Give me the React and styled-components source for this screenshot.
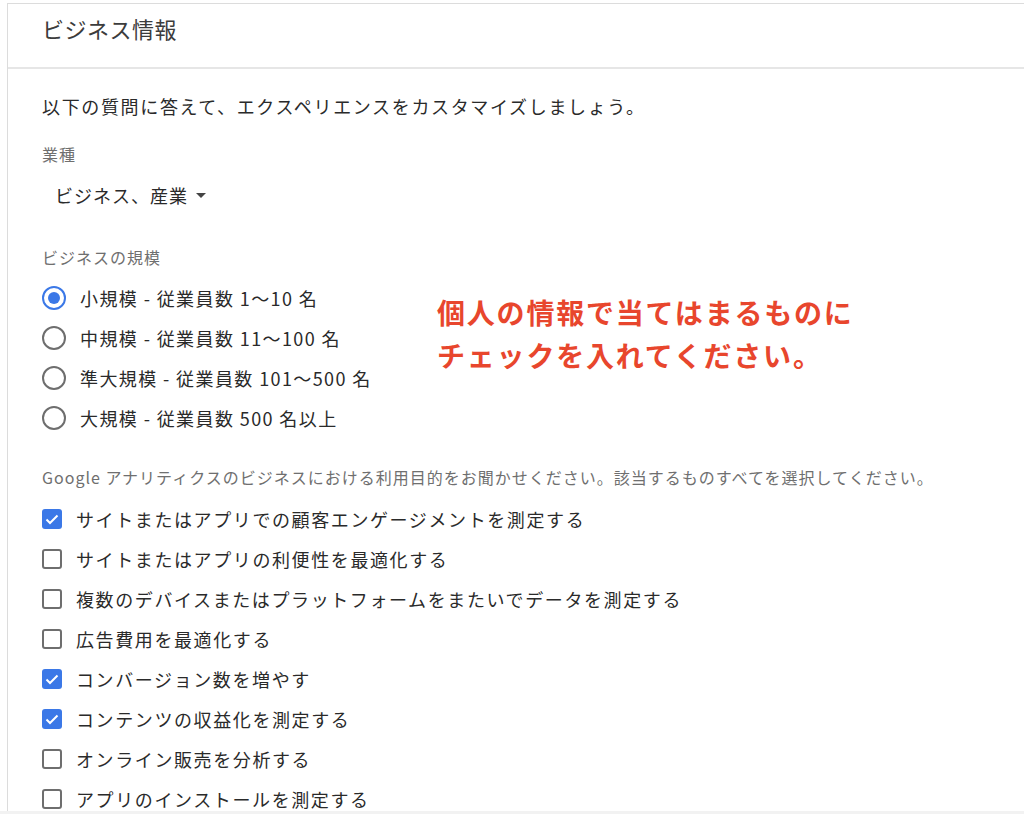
import React from "react";
import styled, { createGlobalStyle } from "styled-components";

const Global = createGlobalStyle`
  html, body { margin: 0; padding: 0; background: #fff; }
  body { font-family: "Noto Sans CJK JP", "Noto Sans", Roboto, sans-serif; }
`;

const Page = styled.div`
  height: 814px;
  box-sizing: border-box;
  padding: 3px 0 0 7px;
  border-bottom: 3px solid #f2f2f2;
  overflow: hidden;
`;

const Card = styled.div`
  height: 100%;
  border-top: 1px solid #dcdcdc;
  border-left: 1px solid #dcdcdc;
  box-sizing: border-box;
  display: flex;
  flex-direction: column;
`;

const Header = styled.div`
  flex-shrink: 0;
  height: 65px;
  box-sizing: border-box;
  padding: 9px 0 0 34px;
  border-bottom: 2px solid #e6e6e6;
  font-size: 22px;
  letter-spacing: 0.5px;
  color: #3c3c3c;
  line-height: 30px;
`;

const Body = styled.div`
  flex-shrink: 0;
  padding: 24px 0 0 34px;
  display: flex;
  flex-direction: column;
`;

const Intro = styled.div`
  font-size: 18px;
  letter-spacing: 1.65px;
  color: #2a2a2a;
  line-height: 26px;
`;

const Label = styled.div`
  font-size: 16px;
  letter-spacing: 1px;
  color: #6f6f6f;
  line-height: 22px;
  margin-top: ${(p) => p.$mt}px;
`;

const Select = styled.div`
  display: flex;
  align-items: center;
  gap: 6px;
  margin: 17px 0 0 13px;
  font-size: 18px;
  letter-spacing: 1px;
  color: #2a2a2a;
  line-height: 26px;
`;

const Caret = styled.span`
  width: 0;
  height: 0;
  border-left: 5px solid transparent;
  border-right: 5px solid transparent;
  border-top: 5px solid #444;
  margin-left: 2px;
`;

const Row = styled.div`
  display: flex;
  align-items: center;
  height: 40px;
`;

const Split = styled.div`
  display: flex;
  align-items: flex-start;
  margin-top: 10px;
`;

const Radios = styled.div`
  display: flex;
  flex-direction: column;
  width: 395px;
`;

const RadioCircle = styled.span`
  width: 24px;
  height: 24px;
  box-sizing: border-box;
  border-radius: 50%;
  border: 2px solid ${(p) => (p.$on ? "#3b78e7" : "#6e6e6e")};
  display: flex;
  align-items: center;
  justify-content: center;
  margin-right: 14px;
  &::after {
    content: "";
    width: 12px;
    height: 12px;
    border-radius: 50%;
    background: ${(p) => (p.$on ? "#3b78e7" : "transparent")};
  }
`;

const OptionText = styled.span`
  font-size: 18px;
  letter-spacing: ${(p) => p.$ls || 1.4}px;
  color: #2a2a2a;
  line-height: 24px;
`;

const Note = styled.div`
  margin-top: 13px;
  font-size: 28px;
  font-weight: 700;
  letter-spacing: 1.8px;
  line-height: 43px;
  color: #e8462d;
`;

const Box = styled.span`
  width: 20px;
  height: 20px;
  box-sizing: border-box;
  border-radius: 3px;
  border: ${(p) => (p.$on ? "none" : "2px solid #6e6e6e")};
  background: ${(p) => (p.$on ? "#3b78e7" : "transparent")};
  display: flex;
  align-items: center;
  justify-content: center;
  margin-right: 14px;
`;

const Checks = styled.div`
  display: flex;
  flex-direction: column;
  margin-top: 11px;
`;

const Check = () => (
  <svg width="14" height="11" viewBox="0 0 14 11">
    <path d="M1.5 5.5 L5 9 L12.5 1.5" fill="none" stroke="#fff" strokeWidth="2" />
  </svg>
);

const radios = [
  ["小規模 - 従業員数 1〜10 名", true],
  ["中規模 - 従業員数 11〜100 名", false],
  ["準大規模 - 従業員数 101〜500 名", false],
  ["大規模 - 従業員数 500 名以上", false],
];

const checks = [
  ["サイトまたはアプリでの顧客エンゲージメントを測定する", true],
  ["サイトまたはアプリの利便性を最適化する", false],
  ["複数のデバイスまたはプラットフォームをまたいでデータを測定する", false],
  ["広告費用を最適化する", false],
  ["コンバージョン数を増やす", true],
  ["コンテンツの収益化を測定する", true],
  ["オンライン販売を分析する", false],
  ["アプリのインストールを測定する", false],
];

export default function App() {
  return (
    <>
      <Global />
      <Page>
        <Card>
          <Header>ビジネス情報</Header>
          <Body>
            <Intro>以下の質問に答えて、エクスペリエンスをカスタマイズしましょう。</Intro>
            <Label $mt={24}>業種</Label>
            <Select>
              ビジネス、産業<Caret />
            </Select>
            <Label $mt={38}>ビジネスの規模</Label>
            <Split>
              <Radios>
                {radios.map(([t, on]) => (
                  <Row key={t}>
                    <RadioCircle $on={on} />
                    <OptionText>{t}</OptionText>
                  </Row>
                ))}
              </Radios>
              <Note>
                個人の情報で当てはまるものに
                <br />
                チェックを入れてください。
              </Note>
            </Split>
            <Label $mt={28}>
              Google アナリティクスのビジネスにおける利用目的をお聞かせください。該当するものすべてを選択してください。
            </Label>
            <Checks>
              {checks.map(([t, on]) => (
                <Row key={t}>
                  <Box $on={on}>{on && <Check />}</Box>
                  <OptionText $ls={1.6}>{t}</OptionText>
                </Row>
              ))}
            </Checks>
          </Body>
        </Card>
      </Page>
    </>
  );
}
